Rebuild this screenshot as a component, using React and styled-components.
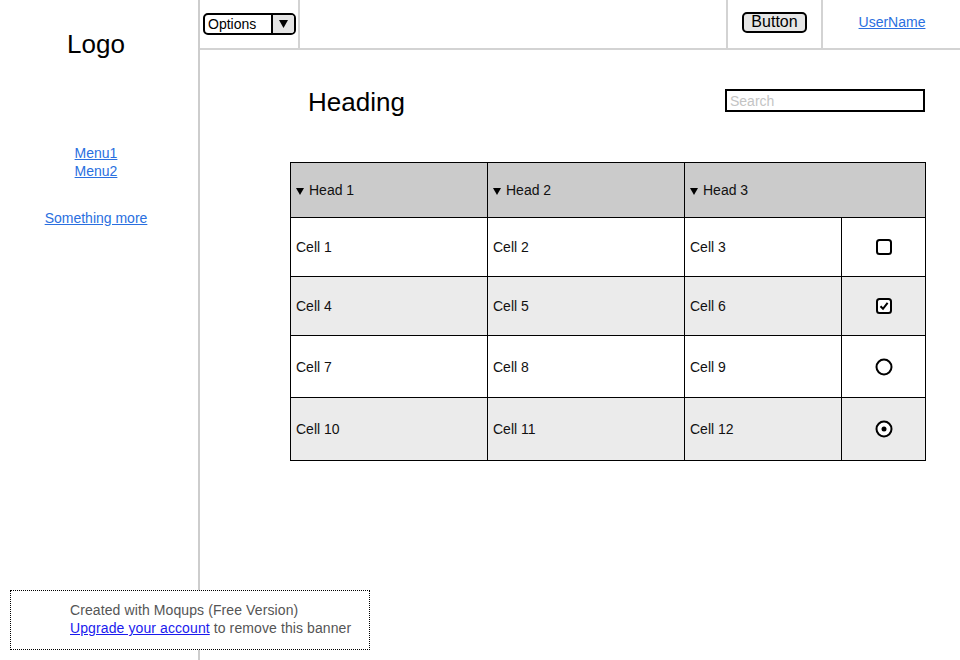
import styled, { createGlobalStyle } from 'styled-components';

const GlobalStyle = createGlobalStyle`
  html, body {
    margin: 0;
    padding: 0;
    background: #fff;
    overflow: hidden;
  }
  body {
    font-family: 'Liberation Sans', Arial, sans-serif;
    color: #000;
  }
`;

const rows = [
  { cells: ['Cell 1', 'Cell 2', 'Cell 3'], control: 'checkbox', height: 59 },
  { cells: ['Cell 4', 'Cell 5', 'Cell 6'], control: 'checked', height: 59, shaded: true },
  { cells: ['Cell 7', 'Cell 8', 'Cell 9'], control: 'radio', height: 62 },
  { cells: ['Cell 10', 'Cell 11', 'Cell 12'], control: 'radioOn', height: 63, shaded: true },
];

const Control = ({ kind }) => {
  if (kind === 'checkbox' || kind === 'checked') {
    return (
      <svg width='18' height='18' viewBox='0 0 18 18'>
        <rect x='2' y='2' width='14' height='14' rx='2.5' fill='#fff' stroke='#000' strokeWidth='2' />
        {kind === 'checked' && (
          <path d='M5.5 9.2 L8 11.8 L12.6 5.8' fill='none' stroke='#000' strokeWidth='2' />
        )}
      </svg>
    );
  }
  return (
    <svg width='20' height='20' viewBox='0 0 20 20'>
      <circle cx='10' cy='10' r='7.5' fill='#fff' stroke='#000' strokeWidth='2' />
      {kind === 'radioOn' && <circle cx='10' cy='10' r='2.5' fill='#000' />}
    </svg>
  );
};

const Caret = () => (
  <CaretIcon width='8' height='7' viewBox='0 0 8 7'>
    <path d='M0 0 H8 L4 7 Z' fill='#000' />
  </CaretIcon>
);

const App = () => {
  return (
    <>
      <GlobalStyle />
      <Page>
        <Sidebar>
          <Logo>Logo</Logo>
          <MenuList>
            <NavLink href='#'>Menu1</NavLink>
            <NavLink href='#'>Menu2</NavLink>
          </MenuList>
          <NavLink href='#'>Something more</NavLink>
        </Sidebar>
        <Main>
          <TopBar>
            <BarCell $width='100px' $left>
              <Select>
                <span>Options</span>
                <SelectArrow>
                  <svg width='9' height='8' viewBox='0 0 9 8'>
                    <path d='M0 0 H9 L4.5 8 Z' fill='#000' />
                  </svg>
                </SelectArrow>
              </Select>
            </BarCell>
            <Spacer />
            <BarCell $width='95px' $center $raised>
              <Button type='button'>Button</Button>
            </BarCell>
            <BarCell $width='138px' $center $raised $last>
              <NavLink href='#'>UserName</NavLink>
            </BarCell>
          </TopBar>
          <Content>
            <TitleRow>
              <Heading>Heading</Heading>
              <Search placeholder='Search' />
            </TitleRow>
            <Table>
              <colgroup>
                <col style={{ width: 197 }} />
                <col style={{ width: 197 }} />
                <col style={{ width: 157 }} />
                <col style={{ width: 84 }} />
              </colgroup>
              <thead>
                <tr>
                  <Th $height={55}><Caret />Head 1</Th>
                  <Th $height={55}><Caret />Head 2</Th>
                  <Th $height={55} colSpan={2}><Caret />Head 3</Th>
                </tr>
              </thead>
              <tbody>
                {rows.map((row) => (
                  <Tr key={row.cells[0]} $shaded={row.shaded}>
                    {row.cells.map((c) => (
                      <Td key={c} $height={row.height}>{c}</Td>
                    ))}
                    <ControlCell $height={row.height}>
                      <Control kind={row.control} />
                    </ControlCell>
                  </Tr>
                ))}
              </tbody>
            </Table>
          </Content>
        </Main>
        <Banner>
          <div>Created with Moqups (Free Version)</div>
          <div>
            <BannerLink href='#'>Upgrade your account</BannerLink> to remove this banner
          </div>
        </Banner>
      </Page>
    </>
  );
};

const Page = styled.div`
  position: relative;
  display: flex;
  width: 960px;
  height: 660px;
`;

const Sidebar = styled.aside`
  width: 200px;
  flex: none;
  box-sizing: border-box;
  padding-right: 6px;
  border-right: 2px solid #cdcdcd;
  display: flex;
  flex-direction: column;
  align-items: center;
`;

const Logo = styled.div`
  font-size: 26px;
  margin-top: 28px;
  line-height: 32px;
`;

const MenuList = styled.div`
  display: flex;
  flex-direction: column;
  align-items: center;
  margin-top: 84px;
  margin-bottom: 29px;
`;

const NavLink = styled.a`
  color: #2a6fe0;
  font-size: 14px;
  line-height: 18px;
`;

const Main = styled.main`
  flex: 1;
  display: flex;
  flex-direction: column;
`;

const TopBar = styled.header`
  height: 48px;
  display: flex;
  border-bottom: 2px solid #d3d3d3;
`;

const BarCell = styled.div`
  width: ${(p) => p.$width};
  display: flex;
  align-items: center;
  justify-content: ${(p) => (p.$center ? 'center' : 'flex-start')};
  padding-left: ${(p) => (p.$left ? '3px' : '0')};
  padding-bottom: ${(p) => (p.$raised ? '4px' : '0')};
  box-sizing: border-box;
  border-right: ${(p) => (p.$last ? 'none' : '2px solid #d3d3d3')};
`;

const Spacer = styled.div`
  flex: 1;
  border-right: 2px solid #d3d3d3;
`;

const Select = styled.div`
  width: 93px;
  height: 22px;
  box-sizing: border-box;
  border: 2px solid #000;
  border-radius: 5px;
  display: flex;
  align-items: center;
  justify-content: space-between;
  font-size: 14px;
  overflow: hidden;
  span {
    padding-left: 3px;
  }
`;

const SelectArrow = styled.div`
  width: 21px;
  height: 100%;
  border-left: 2px solid #000;
  background: #e3e3e3;
  display: flex;
  align-items: center;
  justify-content: center;
`;

const Button = styled.button`
  width: 65px;
  height: 21px;
  padding: 0;
  border: 2px solid #000;
  border-radius: 5px;
  background: #e6e6e6;
  font-family: 'Liberation Sans', Arial, sans-serif;
  font-size: 16px;
  line-height: 16px;
  color: #000;
`;

const Content = styled.section`
  padding: 39px 35px 0 90px;
  display: flex;
  flex-direction: column;
`;

const TitleRow = styled.div`
  display: flex;
  justify-content: space-between;
  align-items: flex-start;
  height: 73px;
`;

const Heading = styled.h1`
  margin: 0 0 0 18px;
  font-size: 26px;
  font-weight: normal;
  line-height: 26px;
`;

const Search = styled.input`
  width: 200px;
  height: 23px;
  box-sizing: border-box;
  margin-right: 1px;
  border: 2px solid #000;
  padding: 0 3px;
  font-family: 'Liberation Sans', Arial, sans-serif;
  font-size: 14px;
  outline: none;
  &::placeholder {
    color: #c4c4c4;
  }
`;

const Table = styled.table`
  width: 635px;
  border-collapse: collapse;
  table-layout: fixed;
  font-size: 14px;
  color: #111;
`;

const CaretIcon = styled.svg`
  display: inline-block;
  margin-right: 5px;
  vertical-align: 0;
`;

const Th = styled.th`
  height: ${(p) => p.$height - 1}px;
  padding: 0 0 0 5px;
  background: #cbcbcb;
  border: 1px solid #000;
  text-align: left;
  font-weight: normal;
`;

const Tr = styled.tr`
  background: ${(p) => (p.$shaded ? '#ebebeb' : '#fff')};
`;

const Td = styled.td`
  height: ${(p) => p.$height}px;
  padding: 0 0 0 5px;
  border: 1px solid #000;
  box-sizing: border-box;
`;

const ControlCell = styled(Td)`
  padding: 0;
  text-align: center;
  svg {
    display: inline-block;
    vertical-align: middle;
  }
`;

const Banner = styled.div`
  position: absolute;
  left: 10px;
  top: 590px;
  width: 360px;
  height: 60px;
  box-sizing: border-box;
  border: 1px dotted #000;
  background: #fff;
  padding: 10px 0 0 59px;
  color: #555;
  font-size: 14px;
  line-height: 18px;
  letter-spacing: 0.1px;
`;

const BannerLink = styled.a`
  color: #1a1aee;
`;

export default App;
